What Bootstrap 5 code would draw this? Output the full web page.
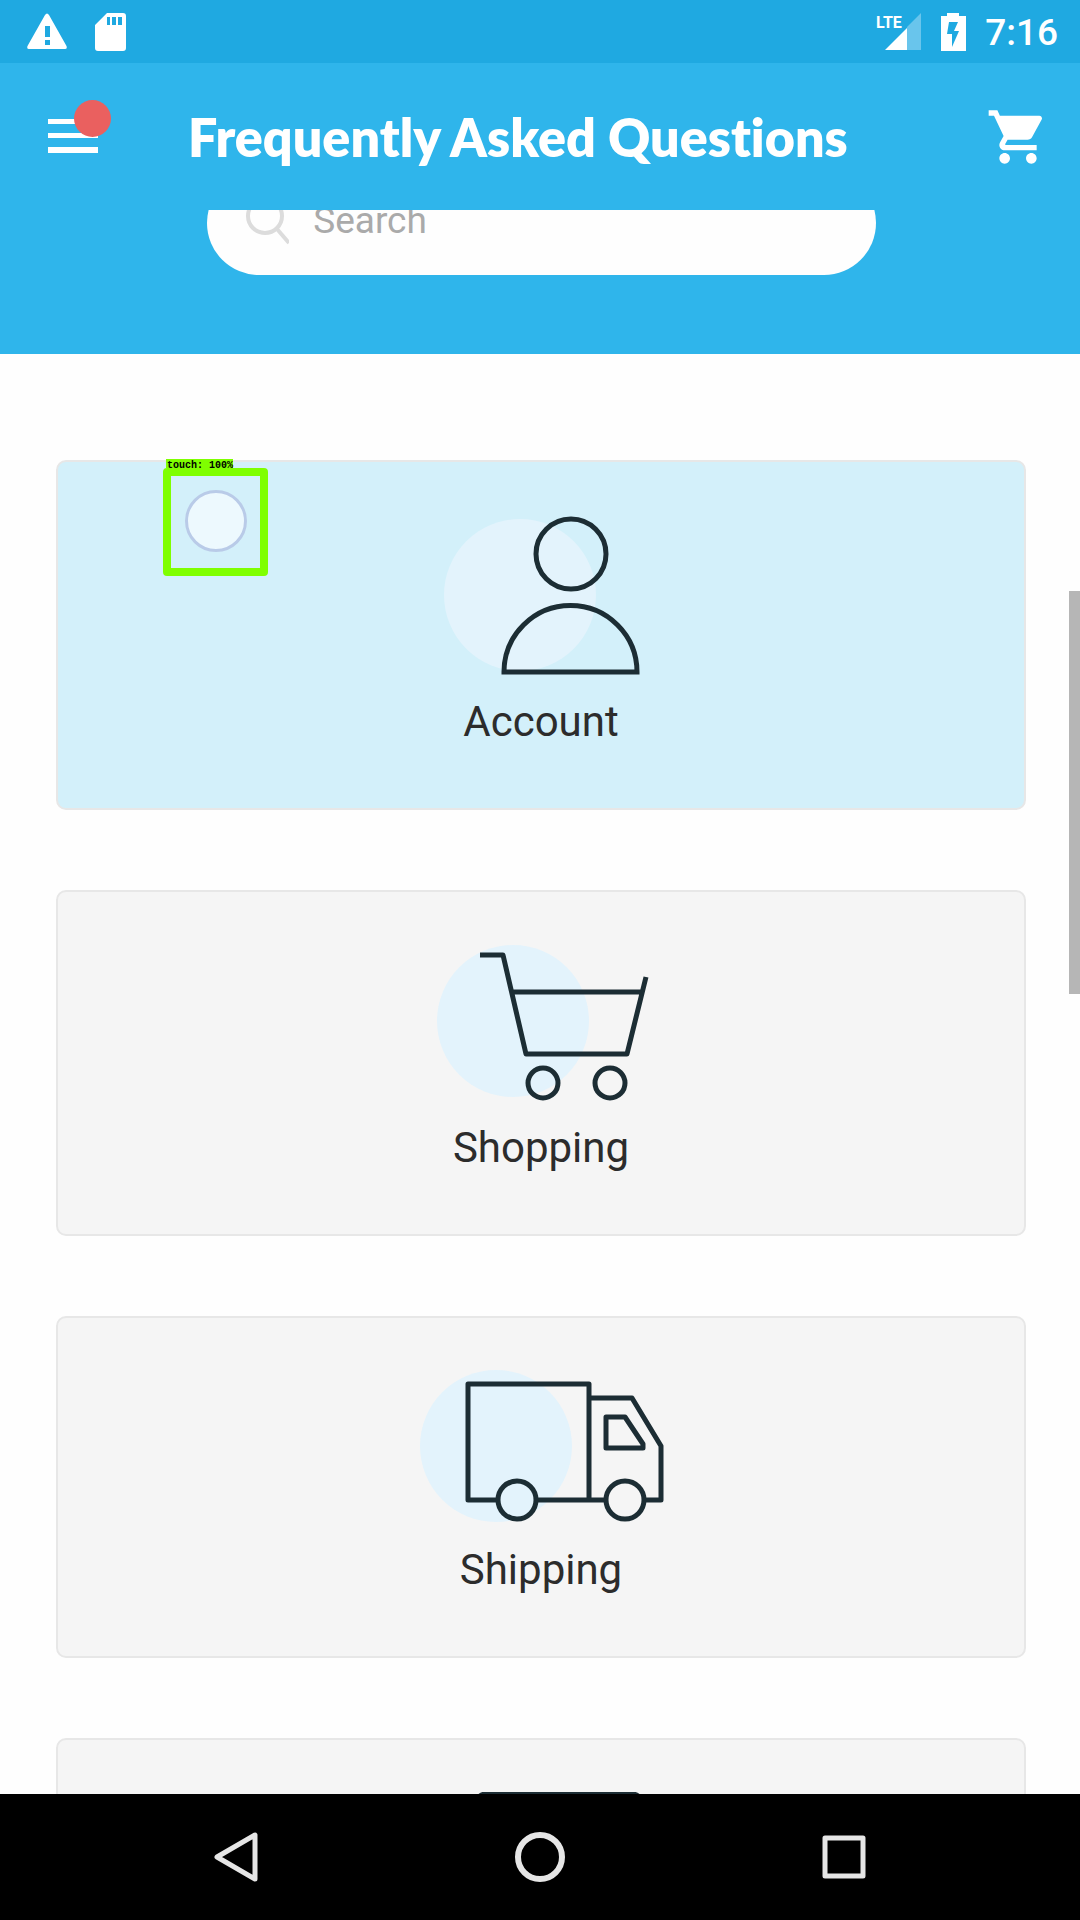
<!DOCTYPE html>
<html lang="en">
<head>
<meta charset="utf-8">
<meta name="viewport" content="width=device-width, initial-scale=1">
<title>Frequently Asked Questions</title>
<link href="https://cdn.jsdelivr.net/npm/bootstrap@5.3.0/dist/css/bootstrap.min.css" rel="stylesheet">
<style>
  body { font-family: Roboto, "Liberation Sans", sans-serif; background: #fefefe; }
  svg { display: block; flex: none; }
  .status-bar { background: #1fa9e1; height: 63px; padding: 0 22px 0 27px; }
  .status-icons { gap: 19px; }
  .status-time { font-size: 37px; font-weight: 500; line-height: 40px; padding-top: 2px; }
  .app-bar { background: #2fb5eb; height: 147px; padding: 0 30px 0 48px; }
  .app-title { font-family: Lato, sans-serif; font-size: 52px; font-weight: 800; line-height: 60px; margin-left: 90px; font-variant-ligatures: none; }
  .menu-dot { top: -19px; left: 26px; width: 37px; height: 37px; background: #ea605f; }
  .bare-btn { background: none; border: 0; padding: 0; }
  .page-area { min-height: 0; }
  .hero-band { background: #2fb5eb; padding: 0 54px 79px 57px; margin-top: -39px; }
  .search-pill { width: 69%; height: 104px; border-radius: 52px; background: #fefefe; padding: 0 40px 0 38px; gap: 24px; }
  .search-pill input { font-size: 37px; line-height: 44px; color: #444; margin-bottom: 4px; }
  .search-pill input::placeholder { color: #aaa; opacity: 1; }
  .topic-list { padding: 106px 54px 0 56px; gap: 80px; }
  .topic-card { background: #f5f5f5; border: 2px solid #e7e7e7; border-radius: 10px; padding: 52px 0 56px; color: #2c2c2c; }
  .topic-card.is-active { background: #d3f0fa; }
  .topic-name { font-size: 42px; line-height: 60px; margin-top: 16px; }
  .topic-card svg { fill: none; stroke: #1c2d34; stroke-width: 5; }
  .topic-card .disc { fill: #e3f3fc; stroke: none; }
  .topic-card .wheel-blue { fill: #e3f3fc; }
  .topic-card .wheel-grey { fill: #f5f5f5; }
  .scroll-thumb { top: 381px; right: 0; width: 11px; height: 403px; background: #b6b6b6; }
  .touch-mark { top: -3px; left: 105px; }
  .touch-tag { background: #7fff00; color: #000; font: bold 10px/14px "Liberation Mono", monospace; margin-left: 3px; width: 67px; height: 9px; padding-left: 1px; white-space: nowrap; }
  .touch-box { width: 105px; height: 108px; border: 8px solid #7fff00; border-radius: 4px; }
  .touch-dot { width: 62px; height: 62px; border: 3px solid #b9cbe8; background: #edf9fe; margin-bottom: 2px; }
  .nav-keys { background: #000; height: 126px; gap: 240px; }
</style>
<script src="https://cdn.jsdelivr.net/npm/bootstrap@5.3.0/dist/js/bootstrap.bundle.min.js"></script>
</head>
<body class="vh-100 d-flex flex-column overflow-hidden">
<div class="status-bar d-flex align-items-center justify-content-between text-white flex-shrink-0">
  <div class="d-flex align-items-center">
    <svg width="40" height="38" viewBox="0 0 40 38" fill="#fff"><path fill-rule="evenodd" d="M18 2Q20-1 22 2L39.500 33Q40.500 36 38 36H2Q-.5 36 .5 33ZM18 13V24H23V13ZM18 27V32H23V27Z"/></svg>
    <svg class="ms-4" width="40" height="38" viewBox="-4 0 40 38" fill="#fff"><path fill-rule="evenodd" d="M12 0H28Q31 0 31 3V35Q31 38 28 38H3Q0 38 0 35V12ZM12 4V12H15V4ZM17 4V12H21V4ZM23 4V12H27V4Z"/></svg>
  </div>
  <div class="status-icons d-flex align-items-center">
    <svg width="46" height="38" viewBox="0 0 46 38"><path d="M45 0V37H31V14Z" fill="#69c5ec"/><path d="M9 37L31 15V37Z" fill="#fff"/><text x="0" y="15" font-family="Roboto, sans-serif" font-size="16" font-weight="700" fill="#fff">LTE</text></svg>
    <svg width="25" height="38" viewBox="0 0 25 38" fill="#fff"><path fill-rule="evenodd" d="M6 0H18V3H25V38H0V3H6ZM8 9L6 21H11V34L18 18H13L17 9Z"/></svg>
    <span class="status-time">7:16</span>
  </div>
</div>
<header class="app-bar d-flex align-items-center text-white flex-shrink-0">
  <button class="bare-btn position-relative" type="button" aria-label="Menu">
    <svg width="50" height="35" viewBox="0 0 50 35" fill="#fff"><path d="M0 0H50V5H0ZM0 14H50V19H0ZM0 28H50V34H0Z"/></svg>
    <span class="menu-dot position-absolute rounded-circle"></span>
  </button>
  <h1 class="app-title mb-0 flex-grow-1 text-nowrap">Frequently Asked Questions</h1>
  <button class="bare-btn" type="button" aria-label="Cart">
    <svg width="64" height="64" viewBox="0 0 24 24" fill="#fff"><path d="M7 18c-1.100 0-1.990.9-1.990 2S5.900 22 7 22s2-.9 2-2-.9-2-2-2zM1 2v2h2l3.600 7.590-1.350 2.450c-.16.280-.25.610-.25.960 0 1.100.9 2 2 2h12v-2H7.420c-.14 0-.25-.11-.25-.25l.03-.12.900-1.630h7.450c.75 0 1.410-.41 1.750-1.030l3.580-6.490c.08-.14.120-.31.120-.48 0-.55-.45-1-1-1H5.210l-.94-2H1zm16 16c-1.100 0-1.990.9-1.990 2s.89 2 1.990 2 2-.9 2-2-.9-2-2-2z"/></svg>
  </button>
</header>
<main class="page-area flex-grow-1 overflow-hidden position-relative">
  <div class="overflow-hidden">
    <div class="hero-band d-flex justify-content-center">
      <label class="search-pill d-flex align-items-center">
        <svg width="44" height="44" viewBox="0 0 44 44" fill="none" stroke="#dcdcdc" stroke-width="4"><circle cx="20" cy="15" r="17"/><path d="M32 28L44 42"/></svg>
        <input class="form-control border-0 bg-transparent shadow-none p-0" type="search" placeholder="Search" aria-label="Search">
      </label>
    </div>
  </div>
  <nav class="topic-list d-flex flex-column">
    <a class="topic-card is-active d-flex flex-column align-items-center text-decoration-none position-relative" href="#account">
      <svg width="250" height="162" viewBox="0 0 250 162"><circle class="disc" cx="104" cy="81" r="76"/><circle cx="155" cy="40" r="35"/><path d="M88 158A66.500 66.500 0 0 1 221 158Z"/></svg>
      <span class="topic-name">Account</span>
      <span class="touch-mark position-absolute">
        <span class="touch-tag d-block">touch: 100%</span>
        <span class="touch-box d-flex align-items-center justify-content-center"><span class="touch-dot rounded-circle"></span></span>
      </span>
    </a>
    <a class="topic-card d-flex flex-column align-items-center text-decoration-none" href="#shopping">
      <svg width="250" height="158" viewBox="0 0 250 158"><circle class="disc" cx="97" cy="77" r="76"/><path d="M64 11H87L110 110H211L230 33M97 48H226" stroke-linejoin="round"/><circle cx="127" cy="139" r="15"/><circle cx="194" cy="139" r="15"/></svg>
      <span class="topic-name">Shopping</span>
    </a>
    <a class="topic-card d-flex flex-column align-items-center text-decoration-none" href="#shipping">
      <svg width="250" height="154" viewBox="0 0 250 154" stroke-linejoin="round"><circle class="disc" cx="80" cy="76" r="76"/><path d="M52 14H173V130H52ZM173 28H216L245 76V130H173M190 47H209L227 74V78H190Z"/><circle class="wheel-blue" cx="101" cy="130" r="19"/><circle class="wheel-grey" cx="209" cy="130" r="19"/></svg>
      <span class="topic-name">Shipping</span>
    </a>
    <a class="topic-card d-flex flex-column align-items-center text-decoration-none" href="#payment" aria-label="More help">
      <svg width="250" height="154" viewBox="0 0 250 154"><rect x="60" y="2" width="166" height="110" rx="10"/></svg>
    </a>
  </nav>
  <div class="scroll-thumb position-absolute"></div>
</main>
<footer class="nav-keys d-flex align-items-center justify-content-center flex-shrink-0">
  <button class="bare-btn" type="button" aria-label="Back"><svg width="64" height="64" viewBox="0 0 64 64" fill="none" stroke="#e6e6e6" stroke-width="5" stroke-linejoin="round"><path d="M51 10V54L13 32Z"/></svg></button>
  <button class="bare-btn" type="button" aria-label="Home"><svg width="64" height="64" viewBox="0 0 64 64" fill="none" stroke="#e6e6e6" stroke-width="6"><circle cx="32" cy="32" r="22"/></svg></button>
  <button class="bare-btn" type="button" aria-label="Recent apps"><svg width="64" height="64" viewBox="0 0 64 64" fill="none" stroke="#e6e6e6" stroke-width="5" stroke-linejoin="round"><path d="M13 13H51V51H13Z"/></svg></button>
</footer>
</body>
</html>
